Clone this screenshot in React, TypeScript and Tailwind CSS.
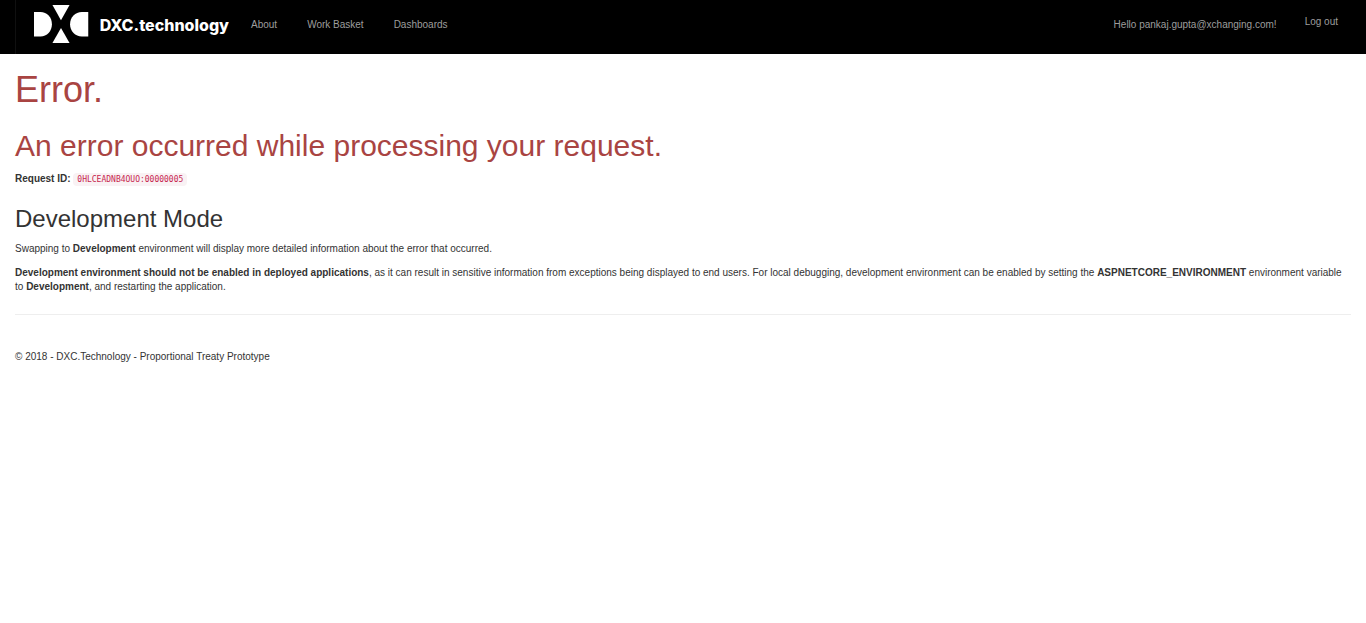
const navLinks = ["About", "Work Basket", "Dashboards"];

function Logo() {
  return (
    <a href="#" aria-label="DXC.technology" className="flex h-[54px] items-center gap-[11px] text-white">
      <svg viewBox="0 0 55 39" className="mt-[-6px] h-[39px] w-[55px]" fill="currentColor" aria-hidden="true">
        <path d="M0 7h6.500c6.500 0 11.500 5.200 11.500 12.200S13 31.500 6.500 31.500H0z" />
        <path d="M54.500 7H48c-6.500 0-11.800 5.200-11.800 12.200S41.500 31.500 48 31.500h6.500z" />
        <path d="M18.500 0h17.200l-8.600 15.200z" />
        <path d="M18.500 38.200h17.200l-8.600-15.200z" />
      </svg>
      <span className="mt-[-4px] font-['Inter',sans-serif] text-[16px] font-extrabold leading-6">DXC.technology</span>
    </a>
  );
}

export default function App() {
  return (
    <div className="font-['Liberation_Sans',Arial,sans-serif] text-[10px] leading-[14px] text-[#333]">
      <header className="flex h-[54px] items-start bg-black pr-7 pl-[15px] text-[#9d9d9d]">
        <div className="w-[214px] border-l border-[#101010] pl-[18px]">
          <Logo />
        </div>
        <nav className="ml-[22px] flex gap-[30px] pt-[18px]">
          {navLinks.map((label) => (
            <a key={label} href="#" className="hover:text-white">
              {label}
            </a>
          ))}
        </nav>
        <div className="ml-auto flex items-start gap-7">
          <a href="#" className="pt-[18px] hover:text-white">
            Hello pankaj.gupta@xchanging.com!
          </a>
          <button type="button" className="pt-[15px] hover:text-white">
            Log out
          </button>
        </div>
      </header>

      <main className="px-[15px] pt-4">
        <h1 className="mb-[19px] text-[36px] leading-[40px] text-[#a94442]">Error.</h1>
        <h2 className="mb-[10px] text-[30px] leading-[33px] text-[#a94442]">
          An error occurred while processing your request.
        </h2>
        <p className="mb-[19px]">
          <strong>Request ID:</strong>{" "}
          <code className="rounded bg-[#f9f2f4] px-1 py-[2px] font-['DejaVu_Sans_Mono',monospace] text-[8px] text-[#c7254e]">
            0HLCEADNB4OUO:00000005
          </code>
        </p>
        <h3 className="mb-[10px] text-[24px] leading-[26px]">Development Mode</h3>
        <p className="mb-[10px]">
          Swapping to <strong>Development</strong> environment will display more detailed information about the error
          that occurred.
        </p>
        <p>
          <strong>Development environment should not be enabled in deployed applications</strong>, as it can result in
          sensitive information from exceptions being displayed to end users. For local debugging, development
          environment can be enabled by setting the <strong>ASPNETCORE_ENVIRONMENT</strong> environment variable to{" "}
          <strong>Development</strong>, and restarting the application.
        </p>
        <hr className="mt-5 mb-[35px] border-[#eee]" />
        <footer>
          <p>© 2018 - DXC.Technology - Proportional Treaty Prototype</p>
        </footer>
      </main>
    </div>
  );
}
